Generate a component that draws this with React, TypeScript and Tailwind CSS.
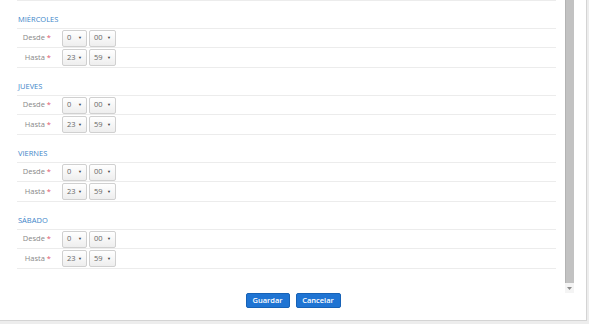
const days = ["MIÉRCOLES", "JUEVES", "VIERNES", "SÁBADO"];

function TimeSelect({ value, width }: { value: string; width: string }) {
  return (
    <div
      className={`flex items-center justify-between h-[17px] ${width} border border-[#d0d0d0] rounded-[2px] bg-gradient-to-b from-white to-[#eeeeee] pl-[4px] pr-[4px] text-[7.5px] text-[#666]`}
    >
      <span>{value}</span>
      <span className="text-[4px] text-[#444] leading-none">▼</span>
    </div>
  );
}

function Row({ label, h, m, height }: { label: string; h: string; m: string; height: string }) {
  return (
    <div className={`flex items-center ${height} border-b border-[#ececec]`}>
      <div className="w-[34px] text-right text-[7.5px] text-[#888]">
        {label}
        <span className="text-[#e05a6f] ml-[2px]">*</span>
      </div>
      <div className="flex gap-[2px] ml-[11px]">
        <TimeSelect value={h} width="w-[25px]" />
        <TimeSelect value={m} width="w-[27px]" />
      </div>
    </div>
  );
}

export default function App() {
  return (
    <div
      className="w-[589px] h-[324px] bg-[#ededed] overflow-hidden"
      style={{ fontFamily: '"Open Sans", "Liberation Sans", sans-serif' }}
    >
      <div className="w-[587px] h-[321px] bg-white border-r border-b border-[#d4d4d4] flex flex-col">
        <div className="h-[293px] flex">
          <div className="w-[564px] pl-[17px] pr-[8px] overflow-hidden">
            <div className="h-px bg-[#ececec]" />
            {days.map((day) => (
              <div key={day}>
                <div className="h-[28px] border-b border-[#ececec] pt-[12px] pl-[1px] text-[7.5px] leading-[12px] text-[#3d85c9]">
                  {day}
                </div>
                <Row label="Desde" h="0" m="00" height="h-[19px]" />
                <Row label="Hasta" h="23" m="59" height="h-[20px]" />
              </div>
            ))}
          </div>
          <div className="w-[9px] flex flex-col ml-[1px]">
            <div className="flex-1 bg-[#c2c2c2] border-l border-[#b3b3b3]" />
            <div className="h-[10px] flex items-center justify-center bg-[#f4f4f4]">
              <svg width="5" height="3" viewBox="0 0 5 3">
                <path d="M0 0 L5 0 L2.5 3 Z" fill="#8a8a8a" />
              </svg>
            </div>
          </div>
        </div>
        <div className="flex justify-center gap-[6px]">
          <button className="h-[15px] w-[44px] rounded-[2px] bg-[#1f74d3] border border-[#1762b6] text-white text-[7.5px] font-semibold">
            Guardar
          </button>
          <button className="h-[15px] w-[45px] rounded-[2px] bg-[#1f74d3] border border-[#1762b6] text-white text-[7.5px] font-semibold">
            Cancelar
          </button>
        </div>
      </div>
    </div>
  );
}
